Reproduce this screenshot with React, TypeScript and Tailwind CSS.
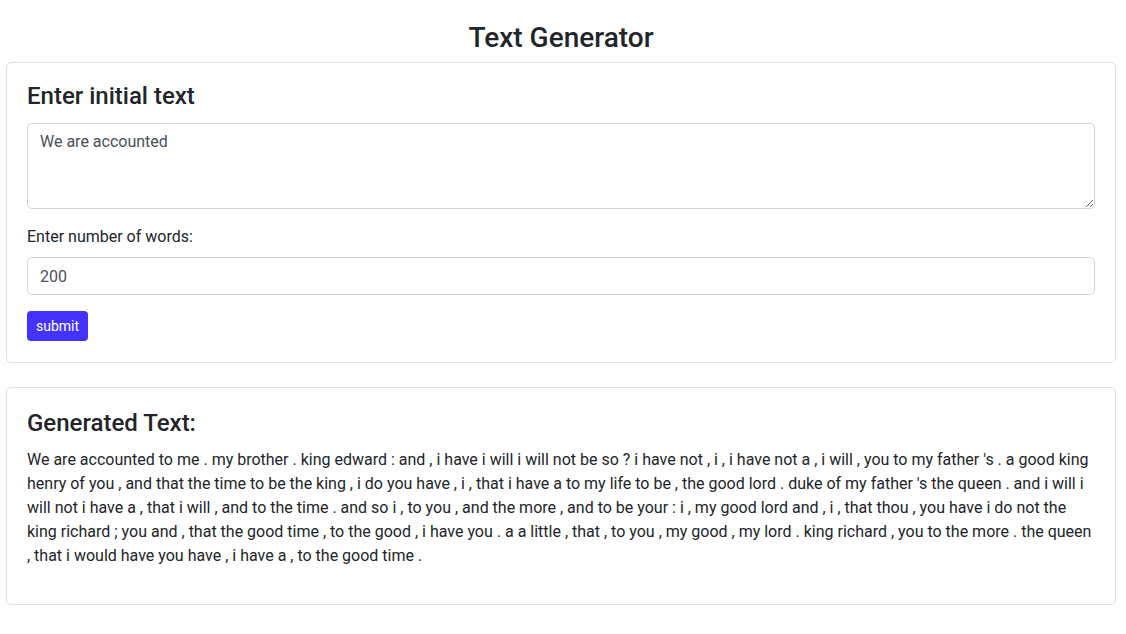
import React, { useState } from 'react';

const generated =
  "We are accounted to me . my brother . king edward : and , i have i will i will not be so ? i have not , i , i have not a , i will , you to my father 's . a good king henry of you , and that the time to be the king , i do you have , i , that i have a to my life to be , the good lord . duke of my father 's the queen . and i will i will not i have a , that i will , and to the time . and so i , to you , and the more , and to be your : i , my good lord and , i , that thou , you have i do not the king richard ; you and , that the good time , to the good , i have you . a a little , that , to you , my good , my lord . king richard , you to the more . the queen , that i would have you have , i have a , to the good time .";

export default function App() {
  const [seed, setSeed] = useState('We are accounted');
  const [count, setCount] = useState('200');

  return (
    <div className="min-h-screen bg-white pl-[6px] pr-[10px] pt-[18px] text-[#212529]" style={{ fontFamily: 'Roboto, "Liberation Sans", sans-serif' }}>
      <h1 className="text-center text-[28px] font-medium leading-[40px] mb-[4px]">Text Generator</h1>

      <div className="rounded-[5px] border border-[#dfdfdf] px-5 pt-[19px] pb-[21px]">
        <h4 className="text-[24px] font-medium leading-[29px] mb-[12px]">Enter initial text</h4>
        <textarea
          className="block w-full h-[86px] rounded-[5px] border border-[#ced4da] px-3 py-[6px] text-base leading-6 text-[#495057] outline-none"
          value={seed}
          onChange={(e) => setSeed(e.target.value)}
        />
        <label className="block mt-[16px] mb-[8px] text-base leading-6">Enter number of words:</label>
        <input
          className="block w-full h-[38px] rounded-[5px] border border-[#ced4da] px-3 text-base text-[#495057] outline-none"
          value={count}
          onChange={(e) => setCount(e.target.value)}
        />
        <button className="mt-4 h-[30px] rounded-[4px] bg-[#4433ff] px-[9px] text-sm text-white">submit</button>
      </div>

      <div className="mt-[24px] rounded-[5px] border border-[#dfdfdf] px-5 pt-[21px] pb-[36px]">
        <h4 className="text-[24px] font-medium leading-[29px] mb-[10px]">Generated Text:</h4>
        <p className="text-base leading-6">{generated}</p>
      </div>
    </div>
  );
}
